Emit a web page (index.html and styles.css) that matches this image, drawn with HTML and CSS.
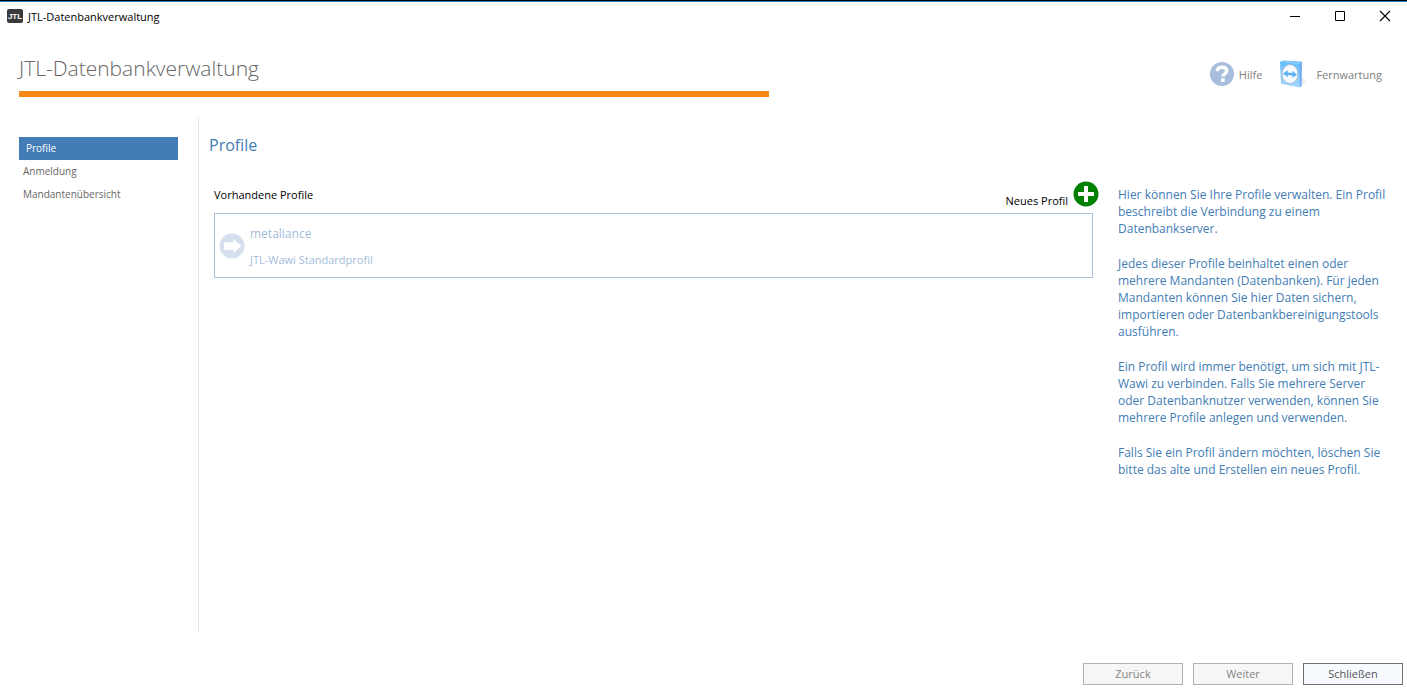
FILE: index.html
```html
<!DOCTYPE html>
<html lang="de">
<head>
<meta charset="utf-8">
<title>JTL-Datenbankverwaltung</title>
<link rel="stylesheet" href="styles.css">
</head>
<body>
<div class="window">
  <div class="titlebar">
    <svg class="app-icon" width="16" height="14" viewBox="0 0 16 14" aria-hidden="true">
      <rect width="16" height="14" rx="2" fill="#3a3a3c"/>
      <text x="8" y="10" text-anchor="middle" class="logo-text">JTL</text>
    </svg>
    <span class="window-title">JTL-Datenbankverwaltung</span>
    <div class="window-controls">
      <button class="control" aria-label="Minimieren"><svg width="12" height="12" viewBox="0 0 12 12"><path d="M1 6.5h10" stroke="#000"/></svg></button>
      <button class="control" aria-label="Maximieren"><svg width="12" height="12" viewBox="0 0 12 12"><path d="M1.500 1.500h9v9h-9z" fill="none" stroke="#000"/></svg></button>
      <button class="control" aria-label="Fenster schließen"><svg width="12" height="12" viewBox="0 0 12 12"><path d="M1 1l10 10M11 1L1 11" stroke="#000" stroke-width="1.100"/></svg></button>
    </div>
  </div>

  <header class="header">
    <h1 class="app-title">JTL-Datenbankverwaltung</h1>
    <div class="header-links">
      <a class="header-link" href="#">
        <svg width="24" height="24" viewBox="0 0 24 24" aria-hidden="true">
          <circle cx="12" cy="12" r="12" fill="#a6bddd"/>
          <path d="M7.300 9.300c0-2.600 1.900-4 4.700-4s4.600 1.400 4.600 3.600c0 3.100-3.700 2.700-3.700 5.600" fill="none" stroke="#fff" stroke-width="3.500"/>
          <rect x="11" y="16.200" width="3.700" height="3.700" fill="#fff"/>
        </svg>
        <span>Hilfe</span>
      </a>
      <a class="header-link remote" href="#">
        <svg width="28" height="28" viewBox="0 0 28 28" aria-hidden="true">
          <defs>
            <linearGradient id="face" x1="0" y1="0" x2="0" y2="1"><stop offset="0" stop-color="#63bdfa"/><stop offset="1" stop-color="#a4d9ff"/></linearGradient>
          </defs>
          <path d="M20 27.500l7-6-4-4z" fill="#ececec"/>
          <path d="M1 1.500L4 .500l19 .900-3 2.600z" fill="#7cc4fb"/>
          <path d="M1 1.500l19 2.500.500 23.500L2 23.800z" fill="url(#face)"/>
          <path d="M20 4l3-2.600-.400 24.600-2.100 1.500z" fill="#6dabf7"/>
          <ellipse cx="11" cy="14" rx="8" ry="9.500" fill="#f7fbff" stroke="#9fb3c6" stroke-width=".8"/>
          <path d="M3.800 13.500l5-3.300v2.400l4.600.400v-2.300l4.800 4-4.800 3v-2.300l-4.600-.500v2.300z" fill="#5fb2f4"/>
        </svg>
        <span>Fernwartung</span>
      </a>
    </div>
  </header>
  <div class="accent"></div>

  <div class="body">
    <nav class="sidebar">
      <a class="nav-item active" href="#" aria-current="page">Profile</a>
      <a class="nav-item" href="#">Anmeldung</a>
      <a class="nav-item" href="#">Mandantenübersicht</a>
    </nav>
    <main class="content">
      <h2 class="page-title">Profile</h2>
      <div class="columns">
        <section class="profiles">
          <div class="profiles-head">
            <span class="profiles-label">Vorhandene Profile</span>
            <button class="new-profile">
              <span class="new-label">Neues Profil</span>
              <svg width="26" height="26" viewBox="0 0 26 26" aria-hidden="true">
                <circle cx="13" cy="13" r="12.500" fill="#008000"/>
                <path d="M13 5v16M5 13h16" stroke="#fff" stroke-width="4"/>
              </svg>
            </button>
          </div>
          <button class="profile-card">
            <svg width="26" height="26" viewBox="0 0 26 26" aria-hidden="true">
              <circle cx="13" cy="13" r="12.500" fill="#d5dff0"/>
              <path d="M5 9.300h9.500V6.300l8 6.700-8 6.700v-3H5z" fill="#fff"/>
            </svg>
            <span class="profile-text">
              <span class="profile-name">metaliance</span>
              <span class="profile-desc">JTL-Wawi Standardprofil</span>
            </span>
          </button>
        </section>
        <aside class="info">
          <p>Hier können Sie Ihre Profile verwalten. Ein Profil beschreibt die Verbindung zu einem Datenbankserver.</p>
          <p>Jedes dieser Profile beinhaltet einen oder mehrere Mandanten (Datenbanken). Für jeden Mandanten können Sie hier Daten sichern, importieren oder Datenbankbereinigungstools ausführen.</p>
          <p>Ein Profil wird immer benötigt, um sich mit JTL-Wawi zu verbinden. Falls Sie mehrere Server oder Datenbanknutzer verwenden, können Sie mehrere Profile anlegen und verwenden.</p>
          <p>Falls Sie ein Profil ändern möchten, löschen Sie bitte das alte und Erstellen ein neues Profil.</p>
        </aside>
      </div>
    </main>
  </div>

  <footer class="footer">
    <button class="btn" disabled>Zurück</button>
    <button class="btn" disabled>Weiter</button>
    <button class="btn primary">Schließen</button>
  </footer>
</div>
</body>
</html>
```
FILE: styles.css
```css
* {
  box-sizing: border-box;
}

body {
  margin: 0;
  background: #fff;
  font-family: "Open Sans", "Noto Sans", sans-serif;
  font-size: 11px;
  color: #000;
}

button {
  font: inherit;
  color: inherit;
  padding: 0;
  border: 0;
  background: none;
}

a {
  color: inherit;
  text-decoration: none;
}

svg {
  display: block;
  flex: none;
}

.window {
  display: flex;
  flex-direction: column;
  min-height: 100vh;
  border-top: 1px solid #000;
}

.titlebar {
  display: flex;
  align-items: center;
  height: 29px;
  padding-left: 7px;
  border-top: 1px solid #2f7fc4;
}

.logo-text {
  font: bold 8px "Liberation Sans", sans-serif;
  fill: #fff;
}

.window-title {
  margin-left: 5px;
}

.window-controls {
  display: flex;
  margin-left: auto;
}

.control {
  display: flex;
  align-items: center;
  justify-content: center;
  width: 45px;
  height: 28px;
}

.header {
  display: flex;
  justify-content: space-between;
  height: 61px;
  padding: 22px 25px 0 19px;
}

.app-title {
  margin: 0;
  font-size: 21px;
  line-height: 32px;
  font-weight: 300;
  color: #666;
}

.header-links {
  display: flex;
  gap: 17px;
  padding-top: 7px;
  color: #808080;
}

.header-link {
  display: flex;
  align-items: center;
  gap: 5px;
  height: 30px;
}

.remote {
  gap: 9px;
}

.accent {
  width: 750px;
  max-width: 100%;
  height: 6px;
  margin-left: 19px;
  background: #f98714;
}

.body {
  display: flex;
  flex: 1;
  padding: 21px 7px 0 19px;
}

.sidebar {
  display: flex;
  flex-direction: column;
  width: 180px;
  padding: 19px 20px 0 0;
  border-right: 1px solid #ebe9e4;
  font-size: 10px;
}

.nav-item {
  padding: 0 4px;
  line-height: 23px;
  color: #666;
}

.nav-item.active {
  padding: 0 7px;
  color: #fff;
  background: #427db5;
}

.content {
  flex: 1;
  min-width: 0;
  padding: 15px 0 0 10px;
}

.page-title {
  margin: 0;
  font-size: 16px;
  line-height: 24px;
  font-weight: 400;
  color: #427db5;
}

.columns {
  display: flex;
  gap: 20px;
  padding: 24px 0 0 5px;
}

.profiles {
  flex: 1;
  min-width: 0;
}

.profiles-head {
  display: flex;
  justify-content: space-between;
  height: 32px;
}

.profiles-label {
  line-height: 28px;
}

.new-profile {
  display: flex;
  gap: 5px;
  height: 26px;
  margin-right: -1px;
}

.new-label {
  padding-top: 12px;
  line-height: 16px;
}

.profile-card {
  display: flex;
  align-items: center;
  gap: 5px;
  width: calc(100% - 5px);
  height: 65px;
  padding-left: 4px;
  border: 1px solid #abc1da;
  text-align: left;
  color: #a3bddb;
}

.profile-text {
  display: flex;
  flex-direction: column;
  gap: 8px;
  padding-top: 2px;
}

.profile-name {
  font-size: 12px;
  line-height: 18px;
}

.profile-desc {
  line-height: 18px;
}

.info {
  width: 282px;
  padding: 5px 9px 0 0;
  font-size: 12px;
  line-height: 17px;
  color: #427db5;
}

.info p {
  margin: 0 0 18px;
}

.footer {
  display: flex;
  justify-content: flex-end;
  gap: 10px;
  padding: 30px 4px 8px;
}

.btn {
  width: 100px;
  height: 22px;
  border: 1px solid #adb2b5;
  background: #f7f7f7;
  line-height: 20px;
  color: #838383;
}

.btn.primary {
  border-color: #707070;
  background: #f7faff;
  color: #555;
}
```
